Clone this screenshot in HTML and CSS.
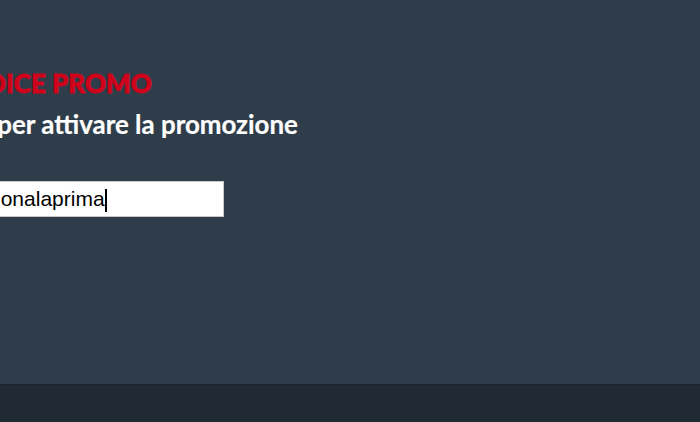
FILE: index.html
```html
<!DOCTYPE html>
<html lang="it">
<head>
<meta charset="utf-8">
<title>Codice promo</title>
<link rel="stylesheet" href="styles.css">
</head>
<body>
<div class="page">
  <main class="main">
    <section class="promo">
      <h2 class="promo-title">INSERISCI IL CODICE PROMO</h2>
      <p class="promo-text">Inserisci il codice per attivare la promozione</p>
      <div class="promo-field">
        <input class="promo-input" type="text" value="promozionalaprima"><span class="caret"></span>
      </div>
    </section>
  </main>
  <footer class="footer"></footer>
</div>
</body>
</html>
```
FILE: styles.css
```css
html, body {
  margin: 0;
  padding: 0;
  height: 100%;
  overflow: hidden;
}
body {
  font-family: Lato, "Noto Sans", sans-serif;
  background: #212a33;
}
.page {
  display: flex;
  flex-direction: column;
  height: 100%;
}
.main {
  height: 384px;
  flex: none;
  background: #2e3d49;
  overflow: hidden;
}
.promo {
  margin-left: -203px;
  padding-top: 68px;
}
.promo-title {
  margin: 0 0 0 -3px;
  font-size: 26px;
  font-weight: 900;
  line-height: 30px;
  color: #d0021b;
  -webkit-text-stroke: 0.8px #d0021b;
  white-space: nowrap;
}
.promo-text {
  margin: 12px 0 0;
  font-size: 25.9px;
  font-weight: 700;
  line-height: 28px;
  color: #ffffff;
  -webkit-text-stroke: 0.2px #ffffff;
  white-space: nowrap;
}
.promo-field {
  position: relative;
  margin: 43px 0 0 120px;
  width: 307px;
}
.promo-input {
  box-sizing: border-box;
  display: block;
  width: 307px;
  height: 36px;
  margin: 0;
  padding: 0 6px 0 8px;
  border: 1px solid #c8c8c8;
  background: #ffffff;
  font-family: "Liberation Sans", Arial, sans-serif;
  font-size: 21px;
  color: #000;
  outline: none;
}
.caret {
  position: absolute;
  left: 188px;
  top: 8px;
  width: 2px;
  height: 23px;
  background: #000;
}
.footer {
  flex: 1;
  background: #212a33;
  border-top: 1px solid #1c252d;
}
```
